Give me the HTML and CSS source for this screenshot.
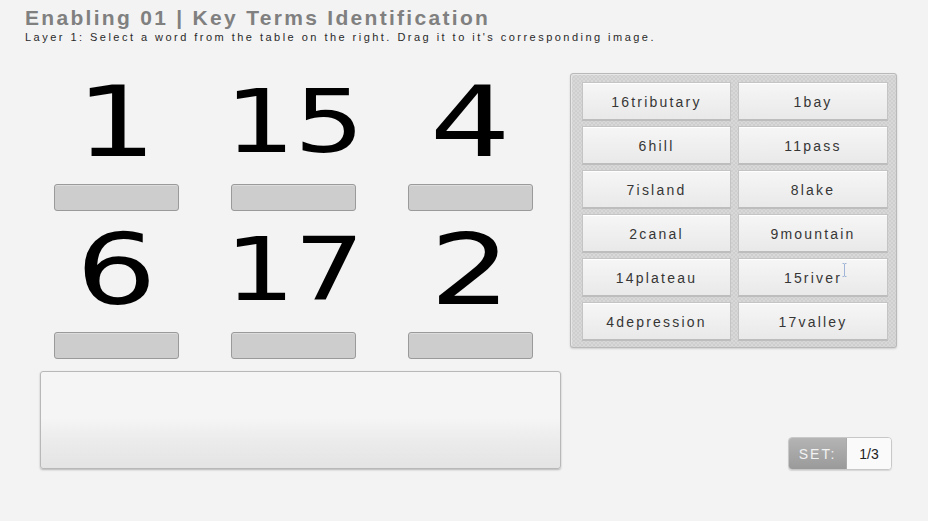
FILE: index.html
```html
<!DOCTYPE html>
<html>
<head>
<meta charset="utf-8">
<link rel="stylesheet" href="styles.css">
</head>
<body>
<header class="header">
  <h1 class="title">Enabling 01 | Key Terms Identification</h1>
  <p class="subtitle">Layer 1: Select a word from the table on the right. Drag it to it's corresponding image.</p>
</header>
<main class="main">
  <section class="left">
    <div class="grid">
      <div class="cell"><div class="pic"><span class="num">1</span></div><div class="blank"></div></div>
      <div class="cell"><div class="pic"><span class="num num--two">15</span></div><div class="blank"></div></div>
      <div class="cell"><div class="pic"><span class="num">4</span></div><div class="blank"></div></div>
      <div class="cell"><div class="pic"><span class="num">6</span></div><div class="blank"></div></div>
      <div class="cell"><div class="pic"><span class="num num--two">17</span></div><div class="blank"></div></div>
      <div class="cell"><div class="pic"><span class="num">2</span></div><div class="blank"></div></div>
    </div>
    <div class="feedback"></div>
  </section>
  <section class="right">
    <div class="words">
      <div class="word">16tributary</div>
      <div class="word">1bay</div>
      <div class="word">6hill</div>
      <div class="word">11pass</div>
      <div class="word">7island</div>
      <div class="word">8lake</div>
      <div class="word">2canal</div>
      <div class="word">9mountain</div>
      <div class="word">14plateau</div>
      <div class="word word--cursor">15river<svg class="cursor" width="5" height="14" viewBox="0 0 5 14"><path d="M0.5 0.5h1.5l0.5 0.6 0.5-0.6h1.5M2.5 1v12M0.5 13.5h1.5l0.5-0.6 0.5 0.6h1.5" fill="none" stroke="#9fb4d6" stroke-width="1"/></svg></div>
      <div class="word">4depression</div>
      <div class="word">17valley</div>
    </div>
    <div class="set">
      <span class="set__label">SET:</span>
      <span class="set__value">1/3</span>
    </div>
  </section>
</main>
</body>
</html>
```
FILE: styles.css
```css
* { box-sizing: border-box; }
html, body { margin: 0; padding: 0; }
body {
  background: #f3f3f3;
  font-family: "Liberation Sans", Arial, sans-serif;
  width: 928px;
  height: 521px;
  overflow: hidden;
}
.header {
  padding: 5px 0 0 25px;
}
.title {
  margin: 0;
  font-size: 21px;
  line-height: 25px;
  font-weight: bold;
  color: #808080;
  letter-spacing: 2.3px;
}
.subtitle {
  margin: 0;
  font-size: 11px;
  line-height: 14px;
  color: #2a2a2a;
  letter-spacing: 2.47px;
}
.main {
  display: flex;
}
.left {
  width: 560px;
  flex: none;
  padding-left: 28px;
  margin-top: 23px;
}
.grid {
  display: grid;
  grid-template-columns: repeat(3, 177px);
  row-gap: 4px;
}
.cell {
  display: flex;
  flex-direction: column;
  align-items: center;
}
.pic {
  height: 110px;
  width: 177px;
  display: flex;
  align-items: center;
  justify-content: center;
}
.num {
  font-family: "DejaVu Sans", Verdana, sans-serif;
  font-size: 98px;
  line-height: 1;
  color: #000;
  display: inline-block;
  transform: scaleX(1.3);
}
.num--two {
  font-size: 88px;
  letter-spacing: -1px;
  transform: scaleX(1.26);
}
.blank {
  margin-top: 7px;
  width: 125px;
  height: 27px;
  background: #cdcdcd;
  border: 1px solid #9a9a9a;
  border-radius: 3px;
  box-shadow: inset 0 1px 0 #dcdcdc;
}
.feedback {
  margin-top: 12px;
  margin-left: 12px;
  width: 521px;
  height: 98px;
  border: 1px solid #b8b8b8;
  border-radius: 3px;
  background: linear-gradient(#f5f5f5 0%, #f5f5f5 48%, #ececec 70%, #e4e4e4 100%);
  box-shadow: 0 1px 2px rgba(0,0,0,0.25);
}
.right {
  margin-left: 10px;
  margin-top: 29px;
  display: flex;
  flex-direction: column;
  align-items: flex-end;
}
.words {
  width: 327px;
  height: 275px;
  padding: 8px 8px 6px 11px;
  border: 1px solid #b9b9b9;
  border-radius: 3px;
  background-color: #cfcfcf;
  background-image:
    linear-gradient(45deg, #d8d8d8 25%, transparent 25%, transparent 75%, #d8d8d8 75%),
    linear-gradient(45deg, #d8d8d8 25%, transparent 25%, transparent 75%, #d8d8d8 75%);
  background-size: 4px 4px;
  background-position: 0 0, 2px 2px;
  box-shadow: inset 1px 1px 0 #e6e6e6, 0 1px 2px rgba(0,0,0,0.15);
  display: grid;
  grid-template-columns: 149px 150px;
  grid-auto-rows: 39px;
  column-gap: 7px;
  row-gap: 5px;
}
.word {
  position: relative;
  display: flex;
  align-items: center;
  justify-content: center;
  padding-top: 1px;
  font-size: 14px;
  letter-spacing: 2.2px;
  color: #363636;
  background: linear-gradient(#f6f6f6, #e9e9e9);
  border: 1px solid #c4c4c4;
  border-bottom: 2px solid #bdbdbd;
  box-shadow: inset 0 1px 0 #fff;
}
.cursor {
  position: absolute;
  left: 103px;
  top: 4px;
}
.set {
  margin-top: 89px;
  margin-right: 5px;
  display: flex;
  height: 33px;
  border: 1px solid #c8c8c8;
  border-radius: 4px;
  overflow: hidden;
  box-shadow: 0 1px 1px rgba(0,0,0,0.12);
}
.set__label {
  width: 58px;
  display: flex;
  align-items: center;
  justify-content: center;
  background: linear-gradient(#b4b4b4, #9a9a9a);
  color: #f2f2f2;
  font-size: 14px;
  letter-spacing: 2px;
  border-right: 1px solid #aaa;
}
.set__value {
  width: 44px;
  display: flex;
  align-items: center;
  justify-content: center;
  background: #fafafa;
  color: #222;
  font-size: 14px;
}
```
